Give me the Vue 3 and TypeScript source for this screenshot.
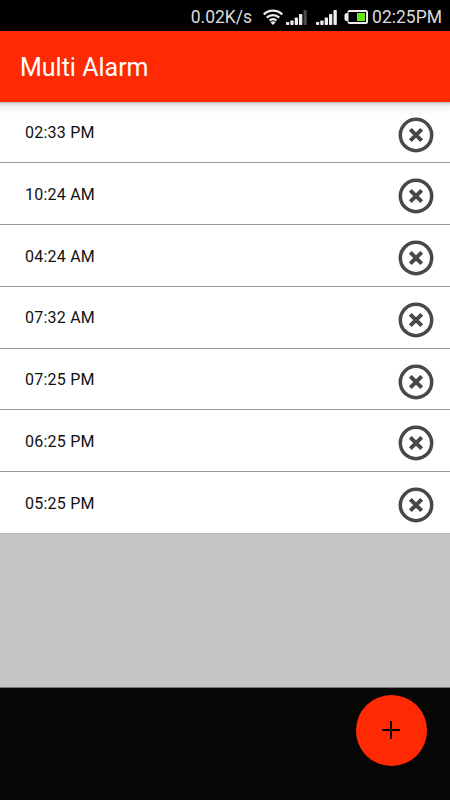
<script setup lang="ts">
interface Alarm {
  id: number
  time: string
}

const alarms: Alarm[] = [
  '02:33 PM', '10:24 AM', '04:24 AM', '07:32 AM', '07:25 PM', '06:25 PM', '05:25 PM',
].map((time, id) => ({ id, time }))
</script>

<template>
  <div class="screen">
    <header class="status">
      <span class="speed">0.02K/s</span>
      <svg class="wifi" width="20" height="16" viewBox="0 0 20 16" fill="none" stroke="#eee" stroke-width="2.3">
        <path d="M.8 5.400a13 13 0 0 1 18.400 0M3.800 8.600a8.800 8.800 0 0 1 12.400 0M6.600 11.600a4.800 4.800 0 0 1 6.800 0" />
        <path d="M10 16l-2.500-2.600a3.600 3.600 0 0 1 5 0z" fill="#eee" stroke="none" />
      </svg>
      <svg class="signal" width="21" height="15" viewBox="0 0 21 15" fill="#eee">
        <rect x="0" y="12" width="3.200" height="3" rx=".7" />
        <rect x="4.300" y="10.500" width="3.300" height="4.500" rx=".7" />
        <rect x="8.700" y="7.500" width="3.300" height="7.500" rx=".7" />
        <rect x="13" y="4" width="3.300" height="11" rx=".7" />
        <rect x="17.500" y="0" width="3.300" height="15" rx=".7" fill="#4a4a4a" />
      </svg>
      <svg class="signal second" width="21" height="15" viewBox="0 0 21 15" fill="#eee">
        <rect x="0" y="12" width="3.200" height="3" rx=".7" />
        <rect x="4.300" y="10.500" width="3.300" height="4.500" rx=".7" />
        <rect x="8.700" y="7.500" width="3.300" height="7.500" rx=".7" />
        <rect x="13" y="4" width="3.300" height="11" rx=".7" />
        <rect x="17.500" y="0" width="3.300" height="15" rx=".7" />
      </svg>
      <svg class="battery" width="24" height="14" viewBox="0 0 24 14">
        <path d="M5.500 0h16.500q2 0 2 2v10q0 2-2 2H5.500q-2 0-2-2V11q-3 0-3-2V5q0-2 3-2V2q0-2 2-2z" fill="#eee" />
        <rect x="4.500" y="2" width="17.500" height="10" fill="#000" />
        <rect x="13" y="3" width="8" height="8" fill="#6be51c" />
      </svg>
      <span class="clock">02:25PM</span>
    </header>

    <div class="appbar"><h1>Multi Alarm</h1></div>

    <main class="content">
      <ul class="list">
        <li v-for="alarm in alarms" :key="alarm.id" class="row">
          <span class="time">{{ alarm.time }}</span>
          <button class="remove" type="button" aria-label="Remove alarm">
            <svg width="36" height="36" viewBox="0 0 36 36" fill="none" stroke="#484848">
              <circle cx="18" cy="18" r="15.700" stroke-width="3.500" />
              <path d="M12.300 12.300l11.400 11.400M23.700 12.300L12.300 23.700" stroke-width="4" />
            </svg>
          </button>
        </li>
      </ul>
    </main>

    <footer class="footer">
      <button class="add" type="button" aria-label="Add alarm">
        <svg width="18" height="18" viewBox="0 0 18 18" stroke="#080000" stroke-width="2">
          <path d="M9 0v18M0 9h18" />
        </svg>
      </button>
    </footer>
  </div>
</template>

<style>
body {
  margin: 0;
}
</style>

<style scoped>
.screen {
  width: 450px;
  height: 800px;
  display: flex;
  flex-direction: column;
  overflow: hidden;
  background: #c4c4c4;
  font-family: Roboto, "Noto Sans", sans-serif;
}

.status {
  box-sizing: border-box;
  height: 31px;
  flex: none;
  display: flex;
  align-items: center;
  padding: 3px 8px 0 0;
  justify-content: flex-end;
  background: #000;
  color: #dcdcdc;
  font-size: 17.5px;
  line-height: 26px;
  white-space: nowrap;
}

.speed,
.clock {
  padding-bottom: 1px;
}

.wifi {
  margin: 0 3px 0 11px;
}

.second {
  margin-left: 9px;
}

.battery {
  margin: 0 4px 0 7px;
}

.appbar {
  height: 70.5px;
  flex: none;
  display: flex;
  align-items: center;
  padding: 4px 0 0 20px;
  box-sizing: border-box;
  background: #ff2a04;
}

h1 {
  margin: 0;
  color: #fff;
  font-size: 25px;
  font-weight: 400;
  line-height: 30px;
}

.content {
  flex: 1;
  background: #c4c4c4;
}

.list {
  margin: 0;
  padding: 0;
  list-style: none;
}

.row {
  box-sizing: border-box;
  height: 61.75px;
  display: flex;
  align-items: center;
  justify-content: space-between;
  padding: 0 16px 0 25px;
  border-bottom: 1px solid #9c9c9c;
  background: #fff;
}

.row:first-child {
  background: linear-gradient(#b9b9b9 0, #e4e4e4 2px, #f3f3f3 5px, #fff 12px);
}

.row:last-child {
  height: 62px;
  border-bottom-color: #b8b8b8;
}

.time {
  padding-top: 2.4px;
  color: #111;
  font-size: 16px;
  line-height: 20px;
  letter-spacing: 0.22px;
}

button {
  border: 0;
  padding: 0;
  display: flex;
}

.remove {
  padding-top: 5.6px;
  background: transparent;
}

.footer {
  box-sizing: border-box;
  height: 113px;
  flex: none;
  display: flex;
  justify-content: flex-end;
  align-items: flex-start;
  padding: 7px 23.500px 0 0;
  border-top: 1px solid #777;
  background: #060606;
}

.add {
  width: 70.5px;
  height: 70.5px;
  align-items: center;
  justify-content: center;
  border-radius: 50%;
  background: #ff2a04;
}
</style>
